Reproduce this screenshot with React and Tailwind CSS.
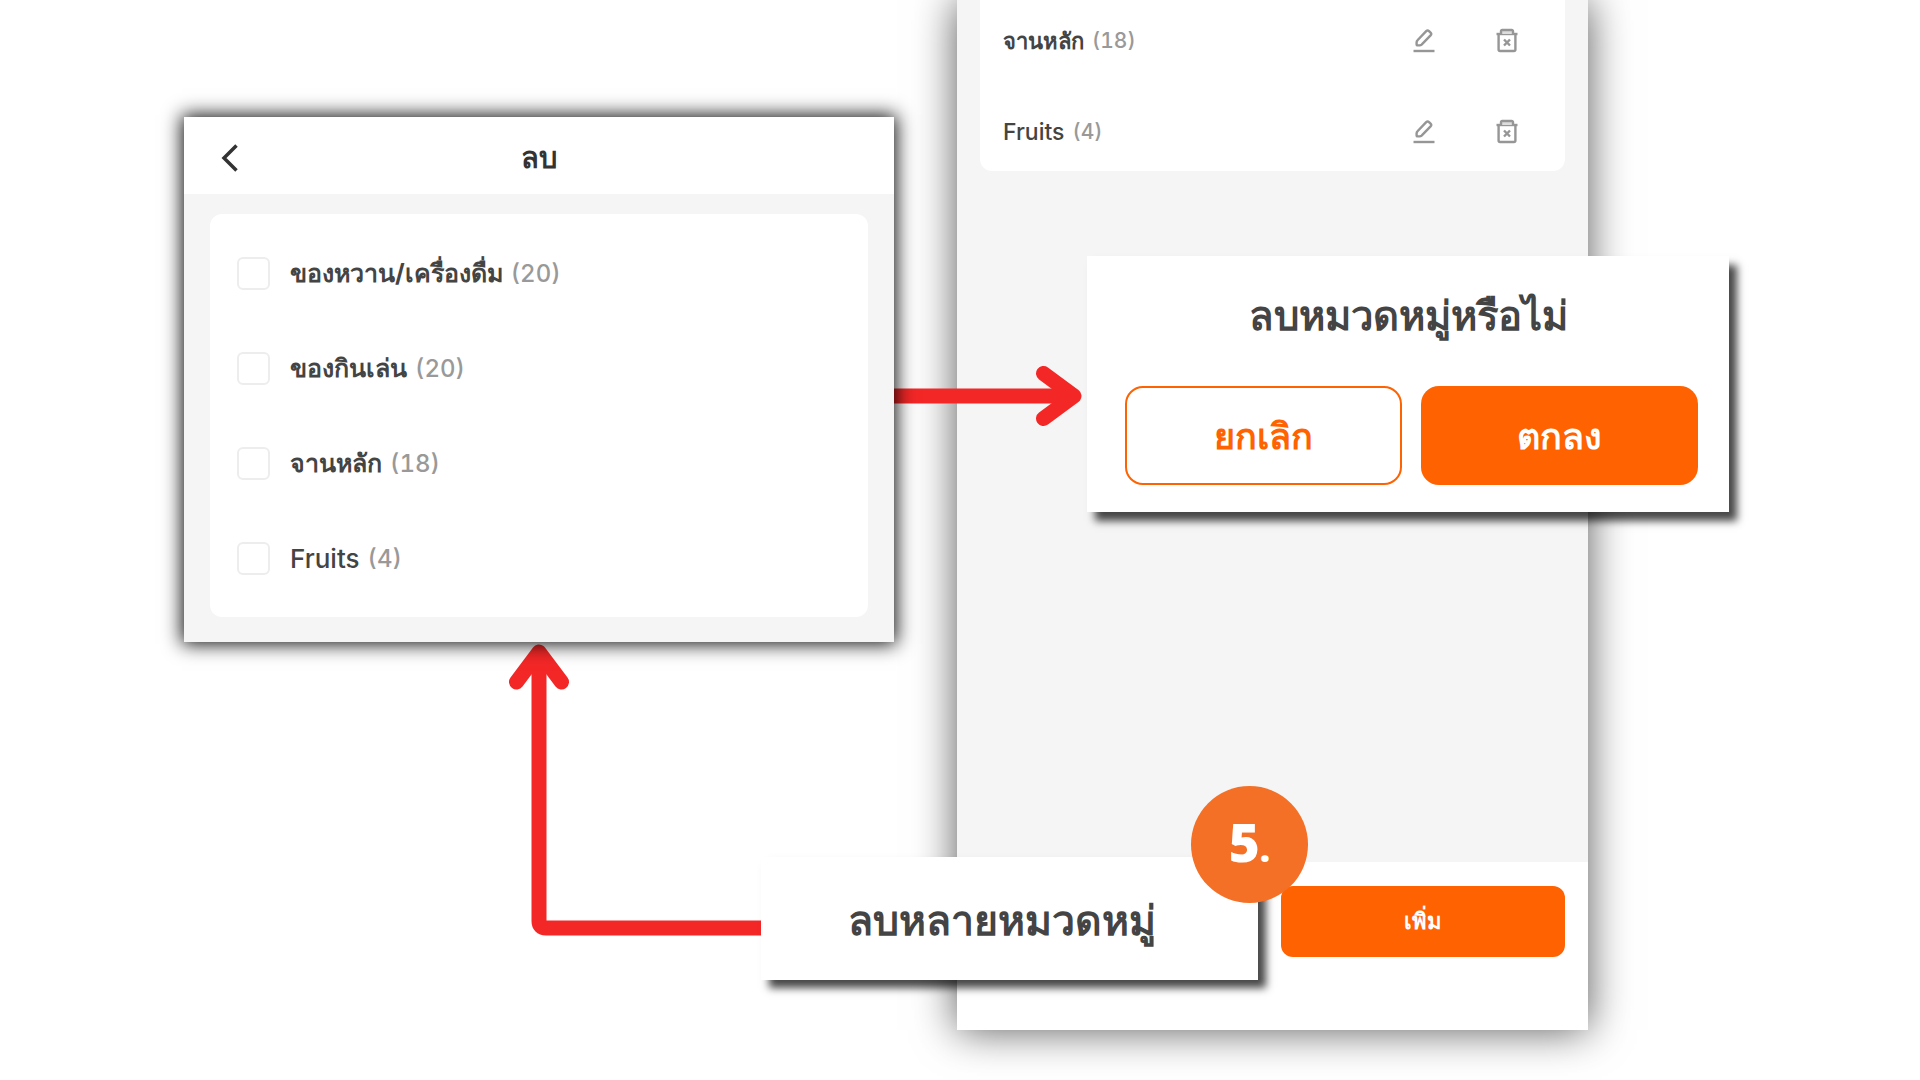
import { useState } from 'react'

const CATEGORIES = [
  { id: 'dessert', name: 'ของหวาน/เครื่องดื่ม', count: 20 },
  { id: 'snack',   name: 'ของกินเล่น',          count: 20 },
  { id: 'main',    name: 'จานหลัก',             count: 18 },
  { id: 'fruits',  name: 'Fruits',              count: 4, latin: true },
]

function BackIcon() {
  return (
    <svg width="17" height="28" viewBox="0 0 17 28" fill="none" stroke="#333" strokeWidth="3.5">
      <path d="M15.5 1.5 L3 14 L15.5 26.5" />
    </svg>
  )
}

function PencilIcon() {
  return (
    <svg width="22" height="26" viewBox="0 0 22 26" fill="none" stroke="#969696" strokeWidth="2.4" strokeLinejoin="round">
      <path d="M13.2 3.1 a2 2 0 0 1 2.8 0 l1.8 1.8 a1.6 1.6 0 0 1 0 2.3 L8.6 16.6 a3 3 0 0 1-2.1 .8 H4.6 a1 1 0 0 1-1-1 v-2 a3 3 0 0 1 .9-2.1 Z" />
      <path d="M0.5 23 H21.5" />
    </svg>
  )
}

function TrashIcon() {
  return (
    <svg width="22" height="26" viewBox="0 0 22 26" fill="none" stroke="#969696" strokeWidth="2.4">
      <path d="M2.6 6 V21.5 a1.5 1.5 0 0 0 1.5 1.5 H17.9 a1.5 1.5 0 0 0 1.5-1.5 V6" />
      <path d="M0.5 6 H21.5" />
      <path d="M5 6 V3.3 a1.3 1.3 0 0 1 1.3-1.3 H15.7 a1.3 1.3 0 0 1 1.3 1.3 V6" fill="#ddd" />
      <path d="M8 11.5 L14 17.5 M14 11.5 L8 17.5" />
    </svg>
  )
}

function Name({ category, small }) {
  return (
    <span className="flex items-center gap-2">
      <span
        className={`text-[#444] ${
          category.latin
            ? small ? 'text-[23px] font-medium' : 'text-[26px] font-medium'
            : small ? 'text-[22px] font-bold' : 'text-[25px] font-bold'
        }`}
      >
        {category.name}
      </span>
      <span className={`font-medium tabular-nums text-[#999] ${small ? 'text-[21px]' : 'text-[24px]'}`}>
        ({category.count})
      </span>
    </span>
  )
}

function DeletePanel() {
  const [checked, setChecked] = useState([])

  const toggle = id =>
    setChecked(checked.includes(id) ? checked.filter(c => c !== id) : [...checked, id])

  return (
    <section className="relative bg-[#f5f5f5] shadow-[0_0_18px_2px_rgba(0,0,0,0.95)]">
      <header className="grid grid-cols-[1fr_auto_1fr] items-center h-[77px] bg-white px-[37px] pt-1">
        <button type="button" aria-label="ย้อนกลับ" className="justify-self-start">
          <BackIcon />
        </button>
        <h1 className="text-[29px] font-bold text-[#333]">ลบ</h1>
      </header>
      <div className="px-[26px] pt-5 pb-[25px]">
        <ul className="bg-white rounded-xl px-[27px] pt-3 pb-[11px]">
          {CATEGORIES.map(c => (
            <li key={c.id} className="h-[95px] flex items-center">
              <label className="flex items-center gap-5">
                <input
                  type="checkbox"
                  checked={checked.includes(c.id)}
                  onChange={() => toggle(c.id)}
                  className="appearance-none size-[33px] rounded-md border-2 border-[#ededed] bg-white checked:bg-[#ff6200]"
                />
                <Name category={c} />
              </label>
            </li>
          ))}
        </ul>
      </div>
    </section>
  )
}

function ConfirmDialog() {
  return (
    <div
      role="dialog"
      aria-labelledby="confirm-title"
      className="absolute z-20 top-64 left-[130px] w-[642px] bg-white pt-8 pb-[27px] shadow-[8px_9px_8px_rgba(0,0,0,0.72)]"
    >
      <h2 id="confirm-title" className="h-[98px] text-center text-[40px] leading-[56px] font-bold text-[#444]">
        ลบหมวดหมู่หรือไม่
      </h2>
      <div className="grid grid-cols-2 gap-[19px] pl-[38px] pr-[31px]">
        <button type="button" className="h-[99px] rounded-[18px] border-2 border-[#ff6200] text-[36px] font-bold text-[#ff6200]">
          ยกเลิก
        </button>
        <button type="button" className="h-[99px] rounded-[18px] bg-[#ff6200] text-[36px] font-bold text-white">
          ตกลง
        </button>
      </div>
    </div>
  )
}

function Phone() {
  return (
    <main className="flex flex-col h-[1030px] bg-[#f5f5f5] shadow-[0_0_40px_rgba(0,0,0,0.66)]">
      <ul className="mx-[23px] bg-white rounded-b-xl pt-7 pb-[26px] flex flex-col gap-[65px]">
        {CATEGORIES.slice(2).map(c => (
          <li key={c.id} className="h-[26px] flex items-center pl-[23px] pr-[47px]">
            <Name category={c} small />
            <span className="ml-auto flex gap-[61px]">
              <button type="button" aria-label={`แก้ไข ${c.name}`}><PencilIcon /></button>
              <button type="button" aria-label={`ลบ ${c.name}`}><TrashIcon /></button>
            </span>
          </li>
        ))}
      </ul>
      <footer className="mt-auto h-[168px] bg-white px-[23px] pt-6 flex justify-end items-start">
        <button type="button" className="w-[284px] h-[71px] rounded-xl bg-[#ff6200] text-[22px] font-bold text-white">
          เพิ่ม
        </button>
      </footer>
    </main>
  )
}

export default function App() {
  return (
    <div className="min-h-screen overflow-hidden bg-white flex items-start gap-[63px] pl-[184px] pr-[332px] font-['Inter','Noto_Sans',sans-serif]">
      <div className="relative z-10 mt-[117px] flex-[710]">
        {/* to the confirm dialog */}
        <svg className="absolute left-full top-[248px]" width="190" height="62" viewBox="0 0 190 62" fill="none" stroke="#f42727" strokeWidth="15" strokeLinecap="round" strokeLinejoin="round">
          <path d="M0 31 H176" strokeLinecap="butt" />
          <path d="M149.5 8.5 L180 31 L149.5 53.5" />
        </svg>
        {/* from the multi-delete button up to this panel */}
        <svg className="absolute top-full left-1/2" width="300" height="300" viewBox="30 0 300 300" overflow="visible" fill="none" stroke="#f42727" strokeWidth="15" strokeLinecap="round" strokeLinejoin="round">
          <path d="M30 12 V279 Q30 286 37 286 H252" strokeLinecap="butt" />
          <path d="M7.5 40 L30 10 L52.5 40" />
        </svg>
        <DeletePanel />
      </div>

      <div className="relative flex-[631]">
        <Phone />
        <ConfirmDialog />
        <button
          type="button"
          className="absolute z-20 top-[857px] left-[-196px] w-[497px] h-[123px] bg-white pr-4 pt-1 text-[41px] font-bold text-[#444] shadow-[8px_8px_8px_rgba(0,0,0,0.72)]"
        >
          ลบหลายหมวดหมู่
        </button>
        <div className="absolute z-30 top-[786px] left-[234px] size-[117px] rounded-full bg-[#f37026] flex items-center justify-center pb-1.5 text-[53px] font-extrabold text-white font-['Open_Sans',sans-serif]">
          <span>5<span className="text-[36px]">.</span></span>
        </div>
      </div>
    </div>
  )
}
